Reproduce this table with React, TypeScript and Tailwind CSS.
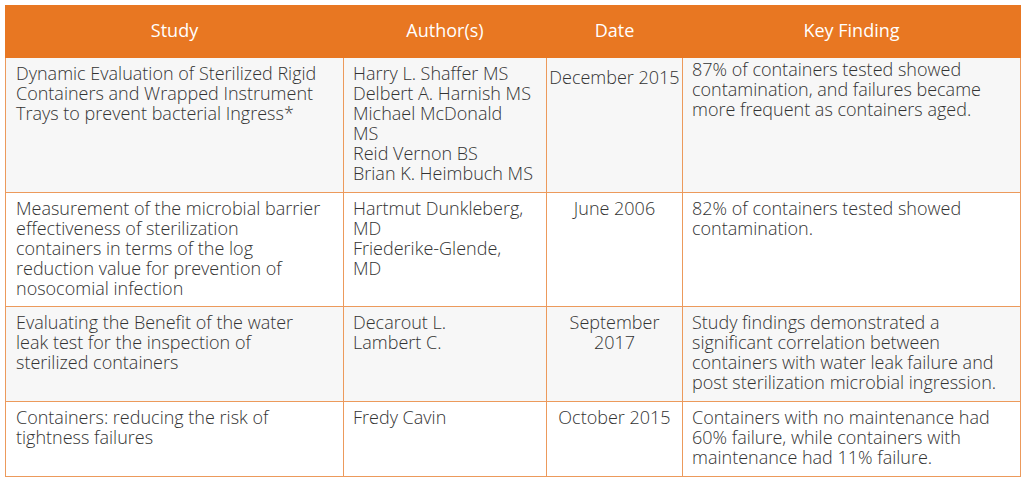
import React from "react";

type Row = {
  study: string[];
  authors: string[];
  date: string[];
  finding: string[];
  gray: boolean;
  h: string;
  first?: boolean;
};

const rows: Row[] = [
  {
    study: ["Dynamic Evaluation of Sterilized Rigid", "Containers and Wrapped Instrument", "Trays to prevent bacterial Ingress*"],
    authors: ["Harry L. Shaffer MS", "Delbert A. Harnish MS", "Michael McDonald", "MS", "Reid Vernon BS", "Brian K. Heimbuch MS"],
    date: ["December 2015"],
    finding: ["87% of containers tested showed", "contamination, and failures became", "more frequent as containers aged."],
    gray: true,
    h: "h-[135px]",
    first: true,
  },
  {
    study: ["Measurement of the microbial barrier", "effectiveness of sterilization", "containers in terms of the log", "reduction value for prevention of", "nosocomial infection"],
    authors: ["Hartmut Dunkleberg,", "MD", "Friederike-Glende,", "MD"],
    date: ["June 2006"],
    finding: ["82% of containers tested showed", "contamination."],
    gray: false,
    h: "h-[114px]",
  },
  {
    study: ["Evaluating the Benefit of the water", "leak test for the inspection of", "sterilized containers"],
    authors: ["Decarout L.", "Lambert C."],
    date: ["September", "2017"],
    finding: ["Study findings demonstrated a", "significant correlation between", "containers with water leak failure and", "post sterilization microbial ingression."],
    gray: true,
    h: "h-[95px]",
  },
  {
    study: ["Containers: reducing the risk of", "tightness failures"],
    authors: ["Fredy Cavin"],
    date: ["October 2015"],
    finding: ["Containers with no maintenance had", "60% failure, while containers with", "maintenance had 11% failure."],
    gray: false,
    h: "h-[75px]",
  },
];

function Lines({ lines }: { lines: string[] }) {
  return (
    <>
      {lines.map((l, j) => (
        <div key={j} className="whitespace-nowrap">
          {l}
        </div>
      ))}
    </>
  );
}

export default function App() {
  return (
    <div className="w-[1022px] h-[480px] bg-white pt-[5px] pl-[5px]" style={{ fontFamily: "'Open Sans', sans-serif" }}>
      <table className="w-[1015px] table-fixed border-collapse text-[18px] leading-[20px] font-light text-[#333333]">
        <colgroup>
          <col className="w-[338px]" />
          <col className="w-[203px]" />
          <col className="w-[136px]" />
          <col className="w-[338px]" />
        </colgroup>
        <thead>
          <tr className="h-[52px] bg-[#e87722] text-white text-[18px]">
            <th className="font-normal text-center border border-[#e87722] pb-[4px]">Study</th>
            <th className="font-normal text-center border border-[#e87722] pb-[4px]">Author(s)</th>
            <th className="font-normal text-center border border-[#e87722] pb-[4px]">Date</th>
            <th className="font-normal text-center border border-[#e87722] pb-[4px]">Key Finding</th>
          </tr>
        </thead>
        <tbody>
          {rows.map((r, i) => (
            <tr key={i} className={(r.gray ? "bg-[#f7f7f7] " : "bg-white ") + r.h}>
              <td className="border border-[#ec9a5c] align-top pl-[10px] pr-0 pt-[5px] pb-0 overflow-hidden">
                <Lines lines={r.study} />
              </td>
              <td className="border border-[#ec9a5c] align-top pl-[9px] pr-0 pt-[5px] pb-0 overflow-hidden">
                <Lines lines={r.authors} />
              </td>
              <td className={"border border-[#ec9a5c] align-top px-0 pb-0 text-center " + (r.first ? "pt-[9px]" : "pt-[5px]")}>
                <Lines lines={r.date} />
              </td>
              <td className={"border border-[#ec9a5c] align-top pl-[9px] pr-0 pb-0 overflow-hidden " + (r.first ? "pt-[1px]" : "pt-[5px]")}>
                <Lines lines={r.finding} />
              </td>
            </tr>
          ))}
        </tbody>
      </table>
    </div>
  );
}
